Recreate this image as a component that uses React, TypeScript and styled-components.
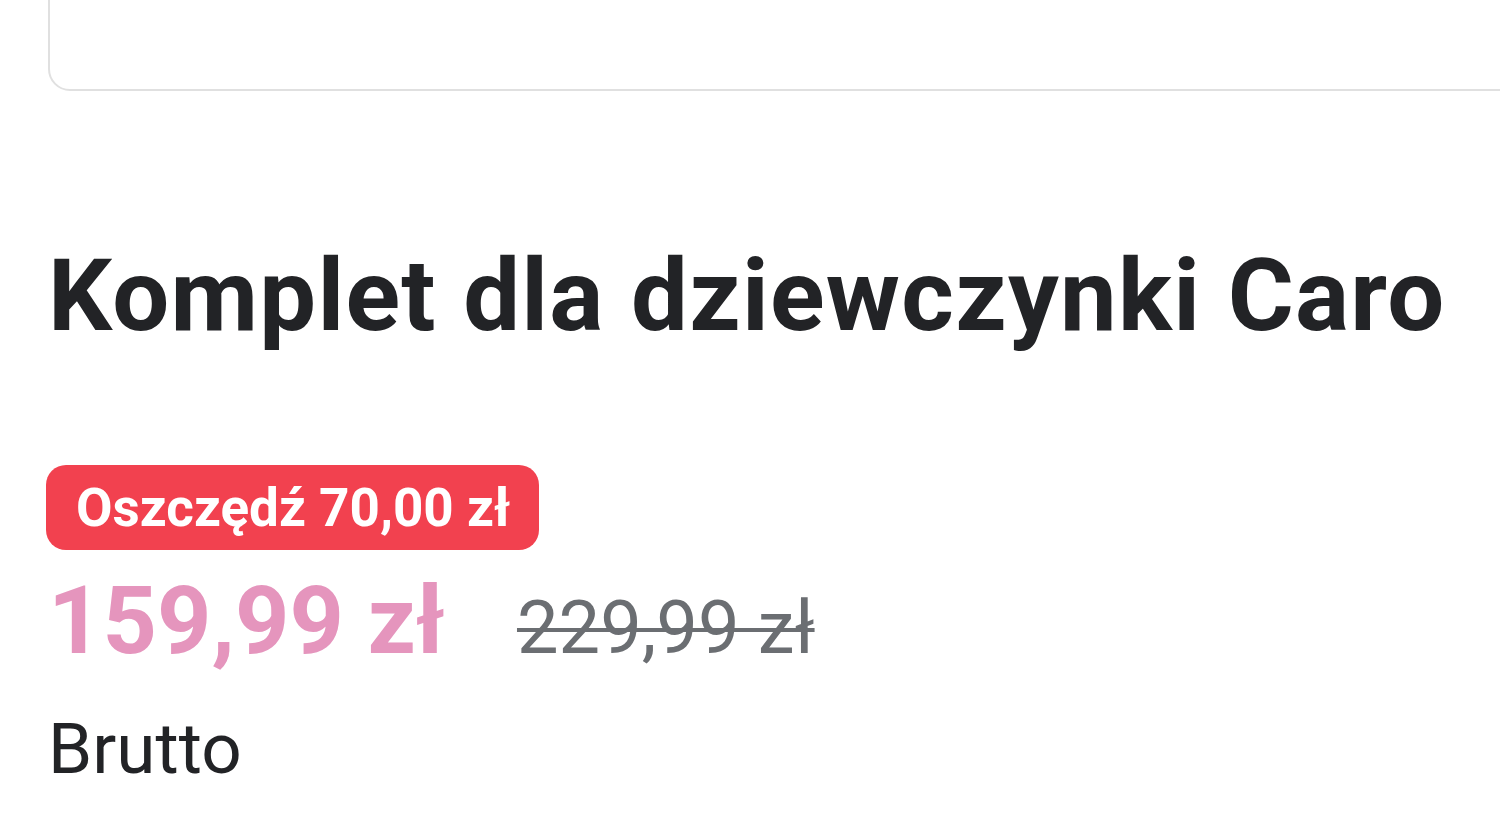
import React from "react";
import styled, { createGlobalStyle } from "styled-components";

const Global = createGlobalStyle`
  html, body { margin: 0; padding: 0; background: #fff; }
  body { font-family: Roboto, "Noto Sans", Arial, sans-serif; width: 1500px; height: 840px; overflow: hidden; }
`;

const Page = styled.div`
  display: flex;
  flex-direction: column;
  padding: 0 0 0 48px;
`;

const Card = styled.div`
  margin-top: -60px;
  height: 151px;
  width: 1500px;
  border: 2px solid #e0e0e0;
  border-radius: 22px;
  box-sizing: border-box;
`;

const Title = styled.h1`
  margin: 145px 0 0 0;
  font-family: Roboto, Arial, sans-serif;
  font-weight: 700;
  font-size: 101px;
  line-height: 120px;
  letter-spacing: 1.3px;
  color: #222326;
  white-space: nowrap;
`;

const Badge = styled.div`
  align-self: flex-start;
  margin: 109px 0 0 -2px;
  height: 85px;
  padding: 0 29px 0 30px;
  display: flex;
  align-items: center;
  background: #f2414f;
  border-radius: 20px;
  color: #fff;
  font-weight: 700;
  font-size: 53px;
`;

const PriceRow = styled.div`
  display: flex;
  align-items: baseline;
  gap: 72px;
  margin-top: 11px;
  line-height: 120px;
`;

const Price = styled.span`
  font-weight: 700;
  font-size: 95px;
  color: #e595bd;
`;

const OldPrice = styled.span`
  font-weight: 400;
  font-size: 74px;
  color: #6b6e72;
  text-decoration: line-through;
  text-decoration-thickness: 4px;
`;

const Net = styled.div`
  margin-top: 11px;
  font-size: 71px;
  line-height: 100px;
  color: #222326;
`;

export default function App() {
  return (
    <>
      <Global />
      <Page>
        <Card />
        <Title>Komplet dla dziewczynki Caro</Title>
        <Badge>Oszczędź 70,00 zł</Badge>
        <PriceRow>
          <Price>159,99 zł</Price>
          <OldPrice>229,99 zł</OldPrice>
        </PriceRow>
        <Net>Brutto</Net>
      </Page>
    </>
  );
}
